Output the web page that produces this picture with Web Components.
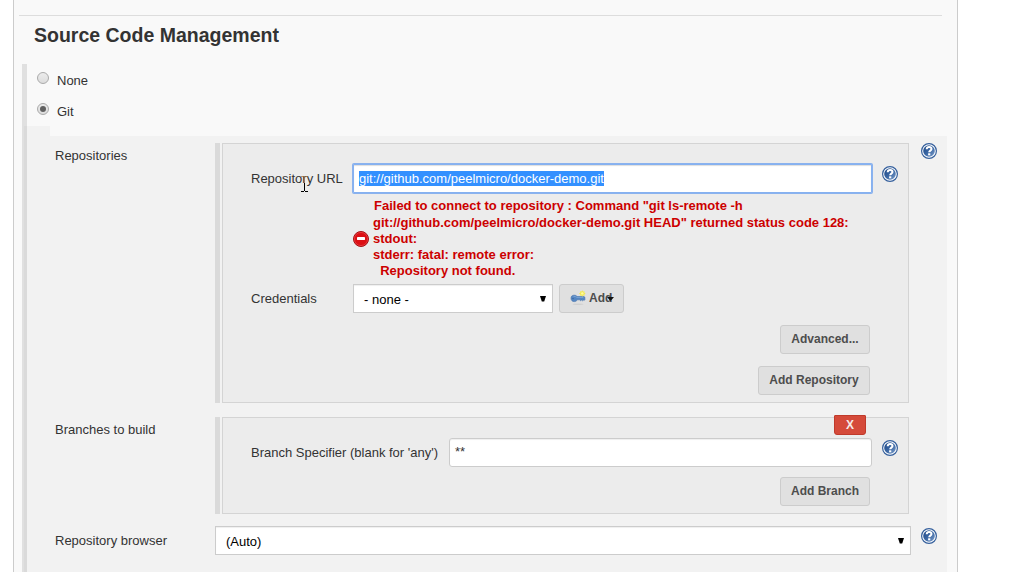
<!DOCTYPE html>
<html lang="en">
<head>
<meta charset="utf-8">
<title>Source Code Management</title>
<style>
html,body{margin:0;background:#fff;overflow:hidden}
body{font:13px/16px "Liberation Sans",Arial,sans-serif;color:#333}
</style>
</head>
<body>
<config-page></config-page>
<script>
const define = (name, html) => {
  const t = document.createElement('template');
  t.innerHTML = html;
  customElements.define(name, class extends HTMLElement {
    constructor() {
      super();
      this.attachShadow({mode: 'open'}).append(t.content.cloneNode(true));
    }
  });
};

define('help-icon', `<style>:host{display:block;width:16px;height:16px}svg{display:block}</style>
<svg width="16" height="16" viewBox="0 0 16 16"><defs><linearGradient id="g" x1="0" y1="0" x2="1" y2="1"><stop offset="0" stop-color="#1d4684"/><stop offset=".5" stop-color="#3a66a3"/><stop offset="1" stop-color="#7fa0cb"/></linearGradient></defs>
<circle cx="8" cy="8" r="7.400" fill="#fff" stroke="#345f9c" stroke-width="1.2"/><circle cx="8" cy="8" r="5.800" fill="url(#g)"/>
<path d="M5.700 6.300C5.800 4.700 6.700 4 8.100 4s2.400.8 2.400 2c0 1.600-2.300 1.700-2.300 3.300" fill="none" stroke="#fff" stroke-width="2"/><rect x="7.100" y="10.300" width="2.200" height="2" fill="#fff"/></svg>`);

define('error-icon', `<style>:host{display:block;width:16px;height:16px}svg{display:block}</style>
<svg width="16" height="16" viewBox="0 0 16 16"><circle cx="8" cy="8" r="7.500" fill="#dc0f14" stroke="#a31216"/><circle cx="8" cy="8" r="6.600" fill="none" stroke="#e8474a" stroke-width=".7"/><rect x="4" y="6" width="8" height="3" rx=".4" fill="#fff"/></svg>`);

define('key-icon', `<style>:host{display:block;width:16px;height:16px}svg{display:block}</style>
<svg width="16" height="16" viewBox="0 0 16 16"><ellipse cx="8" cy="14.300" rx="5.500" ry=".8" fill="#d0d0d0"/>
<path d="M4 5.200C2 5.200 1 6.300 1 8.200s1.300 3.400 3.200 3.400c1.600 0 2.500-.6 3-1.800h2.600l.8 1 .9-.8.900.8.900-.8.900.4.700-.7V7.200l-1-.7H7.200C6.500 5.500 5.400 5.200 4 5.200z" fill="#5586c2" stroke="#4874ad" stroke-width=".6"/><path d="M3.500 6.500h1.800l1.500.9h6.500" fill="none" stroke="#7fa8d8" stroke-width=".8"/><circle cx="3" cy="8.600" r=".7" fill="#315b95"/>
<path d="M12.300.2l.8 1.300 1.500-.2-.2 1.400 1.300.8-1.300.9.200 1.400-1.500-.2-.8 1.200-.8-1.200-1.500.2.200-1.400-1.300-.9 1.300-.8-.2-1.400 1.500.2z" fill="#f1e955"/><circle cx="12.300" cy="3.400" r="1.200" fill="#fffaa0"/></svg>`);

define('radio-option', `<style>:host{display:flex;align-items:flex-start;height:31px}
i{box-sizing:border-box;width:12px;height:12px;margin:8px 8px 0 9px;border:1px solid #aaa;border-radius:50%;background:linear-gradient(#ececec,#dcdcdc);display:grid;place-items:center}
:host([checked]) i::after{content:"";width:6px;height:6px;border-radius:50%;background:#606060}
span{padding-top:9px}</style><i></i><span><slot></slot></span>`);

define('push-button', `<style>:host{display:flex;box-sizing:border-box;align-items:center;justify-content:center;height:29px;border:1px solid #ccc;border-radius:3px;background:#e0e0e0;color:#4d4d4d;font-weight:bold;font-size:12px;line-height:16px;padding-bottom:1px;position:relative}</style><slot></slot>`);

define('text-field', `<style>:host{display:flex;box-sizing:border-box;align-items:center;height:29px;border:1px solid #ccc;border-radius:3px;background:#fff;box-shadow:inset 0 1px 1px #0001;padding:0 5px 1px;color:#333}
:host([focused]){border-color:#86b1f0;border-radius:1px;box-shadow:0 0 0 1px #8ab2ee,inset 0 1px 1px #0002}
:host([focused]) span{background:#3390ff;color:#fff;line-height:15px}</style><span><slot></slot></span>`);

define('select-field', `<style>:host{display:flex;box-sizing:border-box;align-items:center;justify-content:space-between;height:29px;border:1px solid #ccc;background:#fff;box-shadow:inset 0 1px 1px #0001;padding:2px 6px 0 10px;color:#000}svg{display:block;margin-top:-3px}</style><span><slot></slot></span><svg width="6" height="7"><path d="M0 1h6L4.200 6.500H1.800z" fill="#000"/></svg>`);

define('form-row', `<style>:host{display:grid;grid-template-columns:160px 706px 16px;padding-left:28px;align-items:start}
.l{padding-top:5px}:host([nohelp]) help-icon{display:none}:host([single]) .l{padding-top:7px}:host([single]) help-icon{margin-top:2px}</style><div class="l"><slot name="label"></slot></div><div><slot></slot></div><help-icon></help-icon>`);

define('repeat-box', `<style>:host{display:block;box-sizing:border-box;width:694px;border-left:5px solid #dadada;padding-left:2px;position:relative}
div{box-sizing:border-box;height:var(--h);border:1px solid #d4d4d4;background:#ececec;padding:20px 10px 0 28px}</style><div><slot></slot></div>`);

define('text-cursor', `<style>:host{position:absolute;left:81px;top:33px;width:7px;height:16px}svg{display:block}</style><svg width="7" height="16"><path d="M0 .5h3M4 .5h3M3.500 1v6" stroke="#a56a35" stroke-opacity=".7"/><path d="M3.500 7v8M0 15.500h3M4 15.500h3" stroke="#000"/></svg>`);

define('error-message', `<style>:host{display:flex;align-items:center;gap:4px;color:#c00;font-weight:bold;margin:3px 0 0 102px;height:83px}
error-icon{margin-top:3px}.t{white-space:pre}.f{line-height:17px;padding-left:1px}.t{padding-top:1px}.s{line-height:17px}</style><error-icon></error-icon><div class="t"><div class="f">Failed to connect to repository : Command "git ls-remote -h</div><div class="s">git://github.com/peelmicro/docker-demo.git HEAD" returned status code 128:</div><div>stdout:</div><div>stderr: fatal: remote error:</div><div>  Repository not found.</div></div>`);

define('repository-entry', `<style>:host{display:block}
.r{display:flex;align-items:flex-start}.r label{width:102px;padding-top:7px}
.url text-field{width:519px}.url help-icon{margin:2px 0 0 10px}
.cred{margin-top:5px}.cred select-field{width:200px;margin-right:6px}
.cred push-button{width:65px;justify-content:flex-start;padding-left:10px}
.cred key-icon{margin-right:3px}.caret{position:absolute;left:47px;top:11px}
.b{display:flex;flex-direction:column;align-items:flex-end;gap:12px;margin:12px 28px 0 0}.a{width:90px}.c{width:112px}</style>
<div class="r url"><label>Repository URL</label><text-field focused>git://github.com/peelmicro/docker-demo.git</text-field><help-icon></help-icon></div>
<error-message></error-message>
<div class="r cred"><label>Credentials</label><select-field>- none -</select-field><push-button><key-icon></key-icon>Add<svg class="caret" width="7" height="5"><path d="M0 1h7L4 4.500H3z" fill="#111"/></svg></push-button></div>
<div class="b"><push-button class="a">Advanced...</push-button><push-button class="c">Add Repository</push-button></div>
<text-cursor></text-cursor>`);

define('branch-entry', `<style>:host{display:block}
.r{display:flex;align-items:flex-start}label{width:198px;padding-top:7px}
text-field{width:423px}help-icon{margin:2px 0 0 10px}
.b{display:flex;justify-content:flex-end;margin:10px 28px 0 0}.b push-button{width:90px}
.x{position:absolute;left:614px;top:-2px;width:32px;height:20px;border-color:#bf3a2b;border-radius:1px 1px 3px 3px;background:#d54a3a;color:#f6e9e7}</style>
<push-button class="x">X</push-button>
<div class="r"><label>Branch Specifier (blank for 'any')</label><text-field>**</text-field><help-icon></help-icon></div>
<div class="b"><push-button>Add Branch</push-button></div>`);

define('scm-section', `<style>:host{display:block;margin-left:8px;width:925px;height:508px;background:linear-gradient(#e0e0e0,#e0e0e0) 0 0/5px 100% no-repeat}
.opts{padding-left:6px}.step{margin-left:2px;width:23px;height:10px;border-left:3px solid #dadada;background:#f2f2f2}
.git{box-sizing:border-box;margin-left:2px;border-left:3px solid #dadada;background:#f2f2f2;height:436px;padding-top:7px;display:flex;flex-direction:column}
.two{margin-top:14px}.three{margin-top:12px}select-field{width:696px}</style>
<div class="opts"><radio-option>None</radio-option><radio-option checked>Git</radio-option></div>
<div class="step"></div>
<div class="git">
<form-row><span slot="label">Repositories</span><repeat-box style="--h:260px"><repository-entry></repository-entry></repeat-box></form-row>
<form-row class="two" nohelp><span slot="label">Branches to build</span><repeat-box style="--h:97px"><branch-entry></branch-entry></repeat-box></form-row>
<form-row class="three" single><span slot="label">Repository browser</span><select-field>(Auto)</select-field></form-row>
</div>`);

define('config-page', `<style>:host{display:block;box-sizing:border-box;margin-left:13px;width:945px;height:572px;border:solid #ccc;border-width:0 1px;background:#f9f9f9;overflow:hidden}
hr{border:0;height:1px;background:#ddd;margin:15px 15px 0 5px}
h1{margin:0 0 0 20px;font-size:19.500px;line-height:38px;height:48px}</style>
<hr><h1>Source Code Management</h1><scm-section></scm-section>`);
</script>
</body>
</html>
